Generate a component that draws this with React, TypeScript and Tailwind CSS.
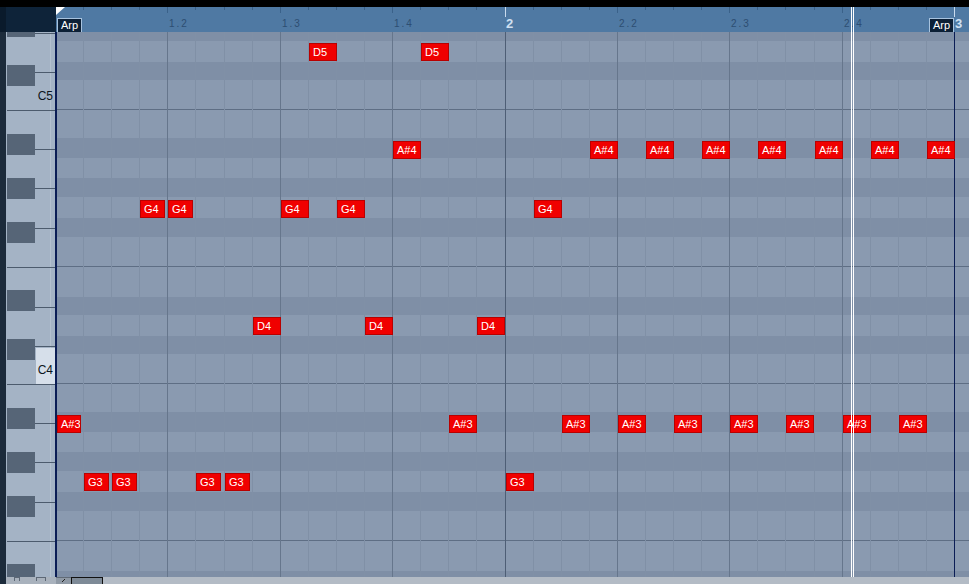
import React from 'react'

const SIXTEENTH = 449.5 / 16

// grid rows from the top edge of the note area, [height, dark, line under]
const rows: [number, boolean, boolean][] = [
  [9, true, false],
  [21, false, false],
  [18, true, false],
  [30, false, true],
  [28, false, false],
  [20, true, false],
  [20, false, false],
  [19, true, false],
  [21, false, false],
  [19, true, false],
  [30, false, true],
  [30, false, false],
  [18, true, false],
  [21, false, false],
  [18, true, false],
  [30, false, true],
  [28, false, false],
  [20, true, false],
  [20, false, false],
  [19, true, false],
  [21, false, false],
  [19, true, false],
  [30, false, true],
  [30, false, false],
  [6, true, false],
]

type Note = { name: string; top: number; steps: number[]; short?: number[] }

const notes: Note[] = [
  { name: 'D5', top: 11, steps: [9, 13] },
  { name: 'A#4', top: 109, steps: [12, 19, 21, 23, 25, 27, 29, 31] },
  { name: 'G4', top: 168, steps: [3, 4, 8, 10, 17], short: [3, 4] },
  { name: 'D4', top: 285, steps: [7, 11, 15] },
  { name: 'A#3', top: 383, steps: [0, 14, 18, 20, 22, 24, 26, 28, 30], short: [0] },
  { name: 'G3', top: 441, steps: [1, 2, 5, 6, 16], short: [1, 2, 5, 6] },
]

const beats = ['', '1.2', '1.3', '1.4', '2', '2.2', '2.3', '2.4', '3']

function Keyboard() {
  const blackKeys = [16, 65, 134, 178, 222, 290, 339, 408, 452, 496, 564]
  const shortLines = [33, 72, 149, 188, 228, 307, 346, 423, 462, 502]
  const longLines = [110, 267, 384, 541]
  return (
    <div className="relative w-[50px] h-[545px] bg-[#a4b3c5] overflow-hidden">
      <svg width="50" height="545" className="absolute left-0 top-0">
        <rect x="44" y="0" width="1" height="545" fill="#b3c0cf" />
        <rect x="30" y="316" width="19" height="36" fill="#d6dfea" />
        {shortLines.map((y) => (
          <rect key={y} x="29" y={y - 32} width="20" height="1" fill="#4c5b6d" />
        ))}
        {longLines.map((y) => (
          <rect key={y} x="1" y={y - 32} width="48" height="1" fill="#4c5b6d" />
        ))}
        {blackKeys.map((y) => (
          <rect key={y} x="1" y={y - 32} width="28" height="21" fill="#566577" />
        ))}
        <rect x="49" y="0" width="1" height="545" fill="#0b1d55" />
      </svg>
      <span className="absolute right-[3px] top-[58px] text-[12px] leading-none text-[#0d1620]">C5</span>
      <span className="absolute right-[3px] top-[332px] text-[12px] leading-none text-[#0d1620]">C4</span>
    </div>
  )
}

function GridLines() {
  const lines = []
  for (let i = 1; i <= 32; i++) {
    const x = Math.round(i * SIXTEENTH)
    let color = '#8090a6'
    if (i % 4 === 0) color = '#66768c'
    if (i === 16) color = '#4e5e75'
    if (i === 32) color = '#0b1d55'
    lines.push(<rect key={i} x={x - 1} y="0" width="1" height="545" fill={color} />)
  }
  return (
    <svg width="913" height="545" className="absolute left-0 top-0">
      <rect x="0" y="0" width="1" height="545" fill="#0b1d55" />
      {lines}
    </svg>
  )
}

function Ruler() {
  const ticks = []
  for (let i = 1; i <= 32; i++) {
    const x = Math.round(i * SIXTEENTH) - 1
    const beat = i % 4 === 0
    ticks.push(
      <rect key={i} x={x} y="0" width="1" height={i % 16 === 0 ? 10 : beat ? 6 : 3} fill={i % 16 === 0 ? '#c9dbee' : '#3a6189'} />
    )
  }
  return (
    <div className="relative flex-1 h-[25px] bg-[#4f79a3]">
      <svg width="913" height="25" className="absolute left-0 top-0">
        <polygon points="0,0 9,0 0,8" fill="#ffffff" />
        {ticks}
      </svg>
      {beats.map((b, i) =>
        b && b.length > 1 ? (
          <span
            key={b}
            className="absolute top-[12px] text-[10px] leading-none tracking-[2px] text-[#2d4e72]"
            style={{ left: Math.round(i * 4 * SIXTEENTH) + 1 }}
          >
            {b}
          </span>
        ) : null
      )}
      <span className="absolute left-[450px] top-[10px] text-[13px] font-bold leading-none text-[#cfe0f2]">2</span>
      <div className="absolute left-[1px] bottom-0 h-[14px] w-[25px] bg-[#0c2036] border border-b-0 border-[#a8c3de] flex items-center justify-center text-[11px] leading-none text-white">
        Arp
      </div>
      <div className="absolute left-[873px] bottom-0 h-[14px] w-[25px] bg-[#0c2036] border border-b-0 border-[#a8c3de] flex items-center justify-center text-[11px] leading-none text-white">
        Arp
      </div>
      <span className="absolute left-[899px] top-[10px] text-[13px] font-bold leading-none text-[#cfe0f2]">3</span>
    </div>
  )
}

export default function App() {
  return (
    <div className="relative w-[969px] h-[584px] overflow-hidden bg-[#8a9ab0] flex flex-col" style={{ fontFamily: '"Liberation Sans", Arial, sans-serif' }}>
      <div className="h-[7px] bg-black" />
      <div className="flex h-[25px]">
        <div className="w-[6px] bg-[#0a1a2b]" />
        <div className="w-[50px] bg-[#0e2339]" />
        <Ruler />
      </div>
      <div className="flex h-[545px]">
        <div className="w-[6px] bg-[#1c2b3b]" />
        <Keyboard />
        <div className="relative flex-1">
          <div className="flex flex-col">
            {rows.map(([h, dark, line], i) => (
              <div
                key={i}
                className={`${dark ? 'bg-[#7f8fa6]' : 'bg-[#8a9ab0]'} ${line ? 'border-b border-[#5e6e84]' : ''}`}
                style={{ height: h }}
              />
            ))}
          </div>
          <GridLines />
          {notes.map((n) =>
            n.steps.map((s) => {
              const left = Math.round(s * SIXTEENTH) + (s === 0 ? 1 : 0)
              const w = n.short && n.short.includes(s) ? 25 : 28
              return (
                <div
                  key={n.name + s}
                  className="absolute h-[18px] bg-[#f00000] border border-[#b80000] text-white text-[11px] leading-[16px] pl-[3px] whitespace-nowrap overflow-hidden"
                  style={{ left, top: n.top, width: w - (s === 0 ? 1 : 0) }}
                >
                  {n.name}
                </div>
              )
            })
          )}
        </div>
      </div>
      <div className="flex h-[7px] bg-[#a9b2bd]">
        <div className="w-[6px] bg-[#1c2b3b]" />
        <div className="w-[50px] flex items-start gap-[16px] pl-[8px]">
          <div className="w-[6px] h-[4px] border border-b-0 border-[#5d6876]" />
          <div className="w-[10px] h-[4px] border border-b-0 border-[#5d6876]" />
        </div>
        <div className="w-[15px] bg-[#8f99a5] border-t border-[#616b77] flex justify-center">
          <svg width="6" height="6">
            <path d="M1 4 L4 1" stroke="#222" strokeWidth="1" />
          </svg>
        </div>
        <div className="w-[32px] bg-[#7e8a97] border border-b-0 border-[#111]" />
        <div className="flex-1 bg-[#b3bbc5]" />
      </div>
      <div className="absolute left-[851px] top-[7px] w-[1px] h-[570px] bg-white" />
      <div className="absolute left-[853px] top-[7px] w-[1px] h-[570px] bg-white" />
    </div>
  )
}
